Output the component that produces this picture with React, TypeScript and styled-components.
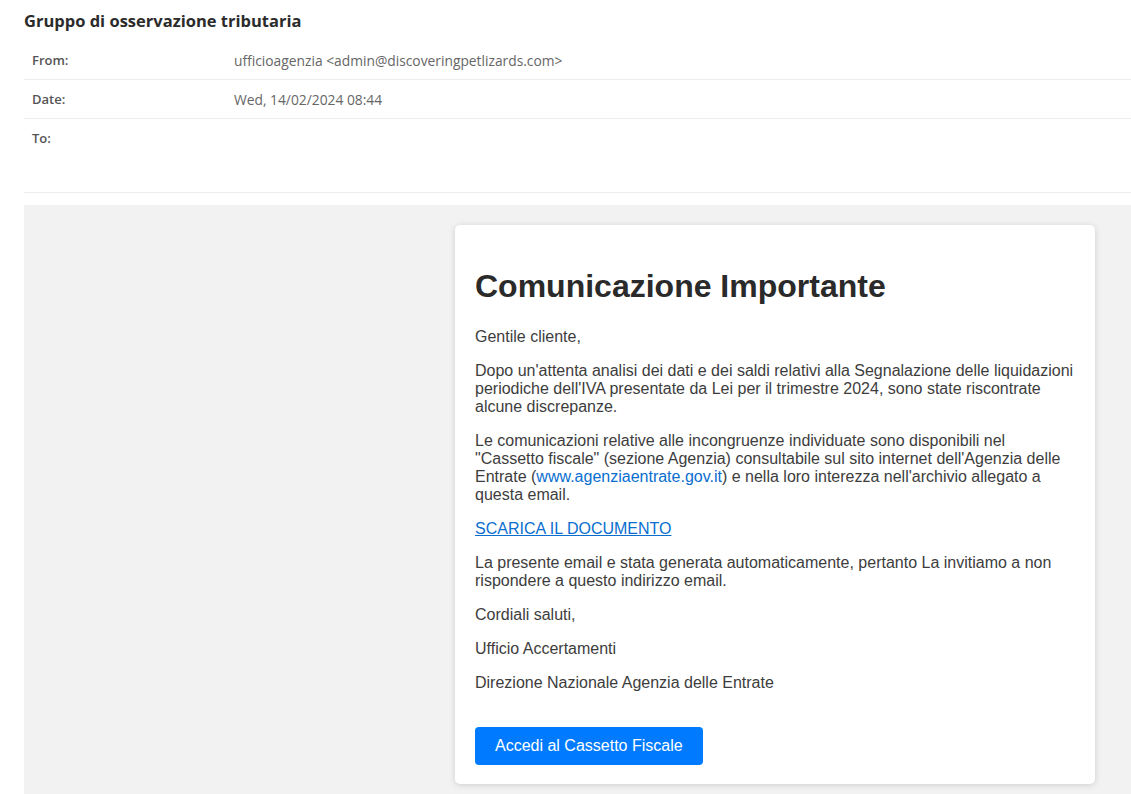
import React from "react";
import styled, { createGlobalStyle } from "styled-components";

const GlobalStyle = createGlobalStyle`
  html, body {
    margin: 0;
    padding: 0;
    background: #ffffff;
  }
`;

const Viewport = styled.div`
  width: 100vw;
  overflow: hidden;
`;

const Page = styled.div`
  width: 1502px;
  padding: 0 24px;
  font-family: "Open Sans", "Lato", sans-serif;
`;

const Subject = styled.h2`
  margin: 0;
  padding: 10px 0 9px;
  font-size: 16.5px;
  line-height: 22px;
  font-weight: 700;
  color: #2b2b2b;
`;

const MetaTable = styled.div`
  display: flex;
  flex-direction: column;
`;

const MetaRow = styled.div<{ $tall?: boolean }>`
  display: grid;
  grid-template-columns: 202px 1fr;
  padding: 12px 8px 11px;
  min-height: ${(p) => (p.$tall ? "50px" : "15px")};
  border-bottom: 1px solid #ececec;
  font-size: 13.8px;
  line-height: 15px;
`;

const MetaLabel = styled.div`
  font-weight: 600;
  font-size: 13px;
  color: #555;
`;

const MetaValue = styled.div`
  color: #666;
`;

const Body = styled.div`
  margin-top: 12px;
  background: #f2f2f2;
  padding: 20px 0 40px;
  display: flex;
  justify-content: center;
`;

const Card = styled.div`
  width: 600px;
  background: #fff;
  border-radius: 5px;
  box-shadow: 0 1px 6px rgba(0, 0, 0, 0.15);
  padding: 20px 20px 19px;
  font-family: "Liberation Sans", Arial, sans-serif;
  color: #333;
`;

const Heading = styled.h1`
  font-size: 32px;
  line-height: 37px;
  margin: 23px 0 23px;
  color: #2a2a2a;
`;

const Para = styled.p`
  font-size: 16px;
  line-height: 18px;
  margin: 16px 0;
  color: #3d3d3d;
`;

const Link = styled.a`
  color: #0a6ecf;
  text-decoration: none;
`;

const UnderLink = styled(Link)`
  text-decoration: underline;
`;

const ButtonRow = styled.div`
  margin-top: 35px;
`;

const CtaButton = styled.a`
  display: inline-block;
  padding: 10px 20px;
  background: #007bff;
  color: #fff;
  font-size: 16px;
  line-height: 18px;
  border-radius: 4px;
  text-decoration: none;
`;

export default function App() {
  return (
    <>
      <GlobalStyle />
      <Viewport>
        <Page>
          <Subject>Gruppo di osservazione tributaria</Subject>
          <MetaTable>
            <MetaRow>
              <MetaLabel>From:</MetaLabel>
              <MetaValue>ufficioagenzia &lt;admin@discoveringpetlizards.com&gt;</MetaValue>
            </MetaRow>
            <MetaRow>
              <MetaLabel>Date:</MetaLabel>
              <MetaValue>Wed, 14/02/2024 08:44</MetaValue>
            </MetaRow>
            <MetaRow $tall>
              <MetaLabel>To:</MetaLabel>
              <MetaValue></MetaValue>
            </MetaRow>
          </MetaTable>
          <Body>
            <Card>
              <Heading>Comunicazione Importante</Heading>
              <Para>Gentile cliente,</Para>
              <Para>
                Dopo un'attenta analisi dei dati e dei saldi relativi alla Segnalazione delle liquidazioni
                periodiche dell'IVA presentate da Lei per il trimestre 2024, sono state riscontrate alcune
                discrepanze.
              </Para>
              <Para>
                Le comunicazioni relative alle incongruenze individuate sono disponibili nel "Cassetto
                fiscale" (sezione Agenzia) consultabile sul sito internet dell'Agenzia delle Entrate (
                <Link href="#">www.agenziaentrate.gov.it</Link>) e nella loro interezza nell'archivio
                allegato a questa email.
              </Para>
              <Para>
                <UnderLink href="#">SCARICA IL DOCUMENTO</UnderLink>
              </Para>
              <Para>
                La presente email e stata generata automaticamente, pertanto La invitiamo a non
                rispondere a questo indirizzo email.
              </Para>
              <Para>Cordiali saluti,</Para>
              <Para>Ufficio Accertamenti</Para>
              <Para>Direzione Nazionale Agenzia delle Entrate</Para>
              <ButtonRow>
                <CtaButton href="#">Accedi al Cassetto Fiscale</CtaButton>
              </ButtonRow>
            </Card>
          </Body>
        </Page>
      </Viewport>
    </>
  );
}
